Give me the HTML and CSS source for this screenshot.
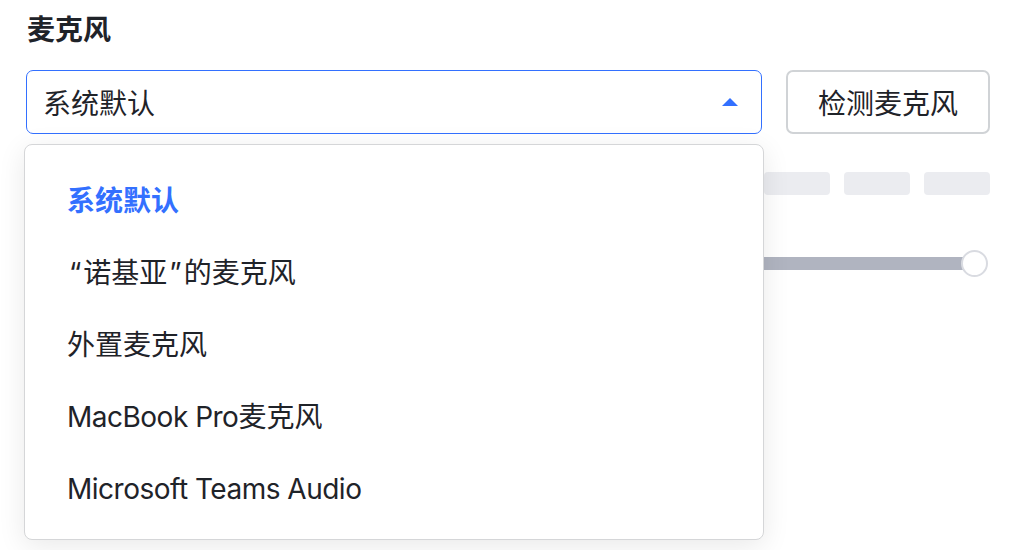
FILE: index.html
```
<!DOCTYPE html>
<html lang="zh-CN">
<head>
<meta charset="utf-8">
<title>麦克风</title>
<link rel="stylesheet" href="styles.css">
</head>
<body>
<div class="page">
  <div class="title">麦克风</div>
  <div class="row">
    <div class="select">
      <span class="select-value">系统默认</span>
      <span class="caret"></span>
    </div>
    <button class="btn">检测麦克风</button>
  </div>
  <div class="bars">
    <span class="bar"></span><span class="bar"></span><span class="bar"></span><span class="bar"></span>
    <span class="bar"></span><span class="bar"></span><span class="bar"></span><span class="bar"></span>
    <span class="bar"></span><span class="bar"></span><span class="bar"></span><span class="bar"></span>
  </div>
  <div class="slider">
    <div class="track"></div>
    <div class="thumb"></div>
  </div>
  <ul class="dropdown">
    <li class="item selected">系统默认</li>
    <li class="item"><span class="quote">“</span>诺基亚<span class="quote">”</span>的麦克风</li>
    <li class="item">外置麦克风</li>
    <li class="item"><span class="latin">MacBook Pro</span>麦克风</li>
    <li class="item"><span class="latin">Microsoft Teams Audio</span></li>
  </ul>
</div>
</body>
</html>
```
FILE: styles.css
```
* { box-sizing: border-box; }
html, body { margin: 0; padding: 0; background: #ffffff; }
body {
  font-family: "Inter", "Noto Sans CJK SC", sans-serif;
  color: #1f2329;
}
.page {
  position: relative;
  padding: 12px 28px 0 26px;
  width: 1018px;
  height: 550px;
}
.title {
  font-size: 28px;
  font-weight: 700;
  line-height: 36px;
  height: 36px;
  margin: 0 0 22px 1px;
}
.row {
  display: flex;
  gap: 24px;
}
.select {
  flex: 0 0 736px;
  height: 64px;
  border: 1px solid #3370ff;
  border-radius: 7px;
  display: flex;
  align-items: center;
  justify-content: space-between;
  padding: 0 23px 0 16px;
  font-size: 28px;
}
.caret {
  width: 0;
  height: 0;
  border-left: 8px solid transparent;
  border-right: 8px solid transparent;
  border-bottom: 8px solid #3370ff;
  margin-top: -1px;
}
.btn {
  flex: 1;
  height: 64px;
  border: 2px solid #d0d3d6;
  border-radius: 7px;
  background: #fff;
  font-family: inherit;
  font-size: 28px;
  color: #1f2329;
  padding: 0;
}
.bars {
  display: flex;
  justify-content: flex-end;
  gap: 14px;
  margin-top: 38px;
}
.bar {
  width: 66px;
  height: 23px;
  border-radius: 4px;
  background: #ebecf0;
}
.slider {
  position: relative;
  margin-top: 55px;
  height: 27px;
  display: flex;
  align-items: center;
}
.track {
  height: 13px;
  width: 946px;
  background: #b0b4c0;
}
.thumb {
  position: absolute;
  left: 935px;
  top: 0;
  width: 27px;
  height: 27px;
  border-radius: 50%;
  border: 2px solid #d9dbe1;
  background: #fff;
}
.dropdown {
  position: absolute;
  left: 24px;
  top: 144px;
  width: 740px;
  height: 396px;
  margin: 0;
  padding: 20px 0 16px;
  list-style: none;
  background: #fff;
  border: 1px solid #d5d6d8;
  border-radius: 8px;
  box-shadow: 0 6px 28px rgba(0, 0, 0, 0.09);
}
.item {
  height: 72px;
  line-height: 72px;
  padding-left: 42px;
  font-size: 28px;
  color: #1f2329;
  white-space: nowrap;
}
.item.selected {
  color: #3370ff;
  font-weight: 700;
}
.latin {
  letter-spacing: -0.5px;
}
.quote {
  padding: 0 2px;
}
```
